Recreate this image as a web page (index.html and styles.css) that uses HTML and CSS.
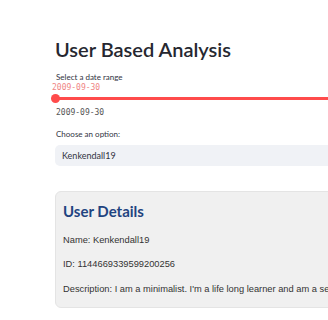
FILE: index.html
```html
<!DOCTYPE html>
<html lang="en">
<head>
<meta charset="UTF-8">
<title>User Based Analysis</title>
<link rel="stylesheet" href="styles.css">
</head>
<body>
<div class="main">
  <h1>User Based Analysis</h1>

  <div class="widget">
    <label class="lbl">Select a date range</label>
    <div class="slider">
      <div class="val">2009-09-30</div>
      <div class="track"><span class="thumb"></span></div>
      <div class="minmax">2009-09-30</div>
    </div>
  </div>

  <div class="widget">
    <label class="lbl">Choose an option:</label>
    <div class="select">Kenkendall19</div>
  </div>

  <div class="card">
    <h2>User Details</h2>
    <p>Name: Kenkendall19</p>
    <p>ID: 1144669339599200256</p>
    <p>Description: I am a minimalist. I'm a life long learner and am a self taught developer.</p>
  </div>
</div>
</body>
</html>
```
FILE: styles.css
```css
html,body{margin:0;padding:0;background:#fff;overflow:hidden}
body{font-family:Lato,"Noto Sans",sans-serif;color:#31333f}
.main{width:700px;padding:36px 0 0 55px}
h1{margin:0 0 9px;font-size:20px;font-weight:600;line-height:26px;color:#262730}
.widget{margin-bottom:10px}
.lbl{display:block;font-size:8px;line-height:12px;margin-left:1px;color:#31333f}
.slider{position:relative}
.val{font-family:"DejaVu Sans Mono",monospace;font-size:8px;color:#f08585;margin-left:-3px;line-height:10px}
.track{height:3px;background:#ff4b4b;margin-top:4px;position:relative}
.thumb{position:absolute;left:-4px;top:-3px;width:9px;height:9px;border-radius:50%;background:#ff4b4b}
.minmax{font-family:"DejaVu Sans Mono",monospace;font-size:8px;color:#555;margin:8px 0 0 1px;line-height:10px}
.select{margin-top:5px;background:#f0f2f6;border-radius:5px;height:21px;line-height:21px;padding-left:7px;font-size:9px;color:#31333f}
.card{margin-top:25px;background:#f0f0f0;border:1px solid #e4e4e4;border-radius:6px;padding:9px 7px 11px}
h2{margin:0 0 11.5px;font-size:15px;line-height:20px;color:#1f4480;font-weight:700}
.card p{margin:0 0 10.5px;font-family:"Liberation Sans",Arial,sans-serif;font-size:9.3px;color:#333;line-height:14px;white-space:nowrap}
.card p:last-child{margin-bottom:0}
```
